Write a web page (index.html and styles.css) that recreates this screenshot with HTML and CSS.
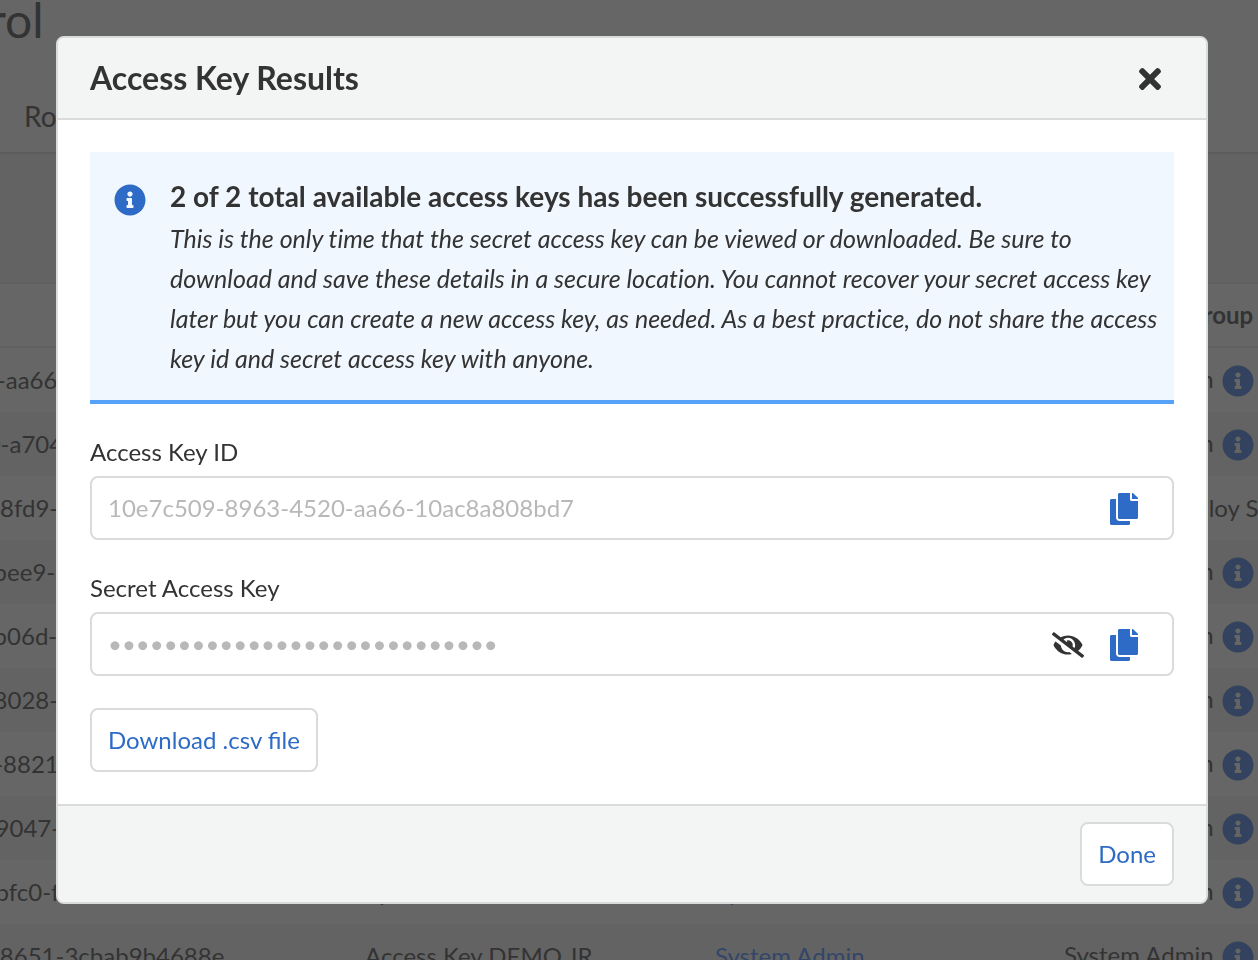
FILE: index.html
```html
<!DOCTYPE html>
<html lang="en">
<head>
<meta charset="utf-8">
<title>Access Control</title>
<link rel="stylesheet" href="styles.css">
</head>
<body>
<svg class="sprite" aria-hidden="true">
  <symbol id="i-info" viewBox="0 0 512 512"><path d="M256 8C119.043 8 8 119.083 8 256c0 136.997 111.043 248 248 248s248-111.003 248-248C504 119.083 392.957 8 256 8zm0 110c23.196 0 42 18.804 42 42s-18.804 42-42 42-42-18.804-42-42 18.804-42 42-42zm56 254c0 6.627-5.373 12-12 12h-88c-6.627 0-12-5.373-12-12v-24c0-6.627 5.373-12 12-12h12v-64h-12c-6.627 0-12-5.373-12-12v-24c0-6.627 5.373-12 12-12h64c6.627 0 12 5.373 12 12v100h12c6.627 0 12 5.373 12 12v24z"/></symbol>
  <symbol id="i-copy" viewBox="0 0 448 512"><path d="M320 448v40c0 13.255-10.745 24-24 24H24c-13.255 0-24-10.745-24-24V120c0-13.255 10.745-24 24-24h72v296c0 30.879 25.121 56 56 56h168zm0-344V0H152c-13.255 0-24 10.745-24 24v368c0 13.255 10.745 24 24 24h272c13.255 0 24-10.745 24-24V128H344c-13.2 0-24-10.8-24-24zm120.971-31.029L375.029 7.029A24 24 0 0 0 358.059 0H352v96h96v-6.059a24 24 0 0 0-7.029-16.97z"/></symbol>
</svg>

<main class="page">
  <h1 class="page-title">Access Control</h1>
  <nav class="tabs"><a class="tab" href="#roles">Roles</a></nav>
  <section class="content">
    <table class="keys">
      <colgroup><col class="col-id"><col class="col-name"><col class="col-user"><col></colgroup>
      <thead>
        <tr><th>Access Key ID</th><th>Name</th><th>User</th><th>Associated Group</th></tr>
      </thead>
      <tbody>
        <tr><td>10e7c509-8963-4520-aa66-10ac8a808bd7</td><td>Access Key</td><td><a href="#u">System Admin</a></td><td>System Admin <svg class="row-info"><use href="#i-info"/></svg></td></tr>
        <tr><td>20417509-8963-4520-a704-51ac8a808bd7</td><td>Access Key</td><td><a href="#u">System Admin</a></td><td>System Admin <svg class="row-info"><use href="#i-info"/></svg></td></tr>
        <tr><td>3ce7f509-8963-4520-8fd9-10ac8a808bd7</td><td>Access Key</td><td><a href="#u">System Admin</a></td><td>Software Deploy Support</td></tr>
        <tr><td>4fc7f509-8a63-4520-bee9-10ac8a808bd7</td><td>Access Key</td><td><a href="#u">System Admin</a></td><td>System Admin <svg class="row-info"><use href="#i-info"/></svg></td></tr>
        <tr><td>5fc7f509-8a63-4520-b06d-10ac8a808bd7</td><td>Access Key</td><td><a href="#u">System Admin</a></td><td>System Admin <svg class="row-info"><use href="#i-info"/></svg></td></tr>
        <tr><td>6fc7f509-8a63-4520-8028-10ac8a808bd7</td><td>Access Key</td><td><a href="#u">System Admin</a></td><td>System Admin <svg class="row-info"><use href="#i-info"/></svg></td></tr>
        <tr><td>7ce7c509-8963-4520-8821-10ac8a808bd7</td><td>Access Key</td><td><a href="#u">System Admin</a></td><td>System Admin <svg class="row-info"><use href="#i-info"/></svg></td></tr>
        <tr><td>8fc7f509-8963-4520-9047-10ac8a808bd7</td><td>Access Key</td><td><a href="#u">System Admin</a></td><td>System Admin <svg class="row-info"><use href="#i-info"/></svg></td></tr>
        <tr><td>9fc7f509-8963-4520-bfc0-f0ac8a808bd7</td><td>System Admin</td><td><a href="#u">System Admin</a></td><td>System Admin <svg class="row-info"><use href="#i-info"/></svg></td></tr>
        <tr><td>2fe7c509-8963-4520-8651-3cbab9b4688e</td><td>Access Key DEMO JR</td><td><a href="#u">System Admin</a></td><td>System Admin <svg class="row-info"><use href="#i-info"/></svg></td></tr>
      </tbody>
    </table>
  </section>
</main>

<div class="overlay">
  <div class="modal" role="dialog" aria-modal="true" aria-labelledby="modal-title">
    <header class="modal-header">
      <h2 class="modal-title" id="modal-title">Access Key Results</h2>
      <button class="icon-button" type="button" aria-label="Close">
        <svg class="icon-close" viewBox="0 0 352 512"><path d="M242.72 256l100.07-100.07c12.28-12.28 12.28-32.19 0-44.48l-22.24-22.24c-12.28-12.28-32.19-12.28-44.48 0L176 189.28 75.93 89.21c-12.28-12.28-32.19-12.28-44.48 0L9.21 111.45c-12.28 12.28-12.28 32.19 0 44.48L109.28 256 9.21 356.07c-12.28 12.28-12.28 32.19 0 44.48l22.24 22.24c12.28 12.28 32.2 12.28 44.48 0L176 322.72l100.07 100.07c12.28 12.28 32.2 12.28 44.48 0l22.24-22.24c12.28-12.28 12.28-32.19 0-44.48L242.72 256z"/></svg>
      </button>
    </header>
    <div class="modal-body">
      <div class="notice">
        <svg class="notice-icon"><use href="#i-info"/></svg>
        <div class="notice-text">
          <h3 class="notice-title">2 of 2 total available access keys has been successfully generated.</h3>
          <p class="notice-copy">This is the only time that the secret access key can be viewed or downloaded. Be sure to download and save these details in a secure location. You cannot recover your secret access key later but you can create a new access key, as needed. As a best practice, do not share the access key id and secret access key with anyone.</p>
        </div>
      </div>
      <div class="field">
        <label class="label" for="key-id">Access Key ID</label>
        <div class="control">
          <input class="input" id="key-id" type="text" readonly value="10e7c509-8963-4520-aa66-10ac8a808bd7">
          <button class="icon-button" type="button" aria-label="Copy access key ID"><svg class="icon-copy"><use href="#i-copy"/></svg></button>
        </div>
      </div>
      <div class="field">
        <label class="label" for="key-secret">Secret Access Key</label>
        <div class="control">
          <input class="input" id="key-secret" type="text" readonly value="••••••••••••••••••••••••••••">
          <button class="icon-button" type="button" aria-label="Show secret access key">
            <svg class="icon-eye" viewBox="0 0 640 512"><path d="M320 400c-75.85 0-137.25-58.71-142.9-133.11L72.2 185.82c-13.79 17.3-26.48 35.59-36.72 55.59a32.35 32.35 0 0 0 0 29.19C89.71 376.41 197.07 448 320 448c26.91 0 52.87-4 77.89-10.46L346 397.39a144.13 144.13 0 0 1-26 2.61zm313.82 58.1l-110.55-85.44a331.25 331.25 0 0 0 81.25-102.07 32.35 32.35 0 0 0 0-29.19C550.29 135.59 442.93 64 320 64a308.15 308.15 0 0 0-147.32 37.7L45.46 3.37A16 16 0 0 0 23 6.18L3.37 31.45A16 16 0 0 0 6.18 53.9l588.36 454.73a16 16 0 0 0 22.46-2.81l19.64-25.27a16 16 0 0 0-2.82-22.45zm-183.72-142l-39.3-30.38A94.75 94.75 0 0 0 416 256a94.76 94.76 0 0 0-121.31-92.21A47.65 47.65 0 0 1 304 192a46.64 46.64 0 0 1-1.54 10l-73.61-56.89A142.31 142.31 0 0 1 320 112a143.92 143.92 0 0 1 144 144c0 21.63-5.29 41.79-13.9 60.11z"/></svg>
          </button>
          <button class="icon-button" type="button" aria-label="Copy secret access key"><svg class="icon-copy"><use href="#i-copy"/></svg></button>
        </div>
      </div>
      <button class="button" type="button">Download .csv file</button>
    </div>
    <footer class="modal-footer">
      <button class="button" type="button">Done</button>
    </footer>
  </div>
</div>
</body>
</html>
```

FILE: styles.css
```css
* { box-sizing: border-box; }

body {
  margin: 0;
  height: 100vh;
  overflow: hidden;
  background: #666;
  color: #333;
  font: 24px/32px Lato, "Liberation Sans", sans-serif;
}

h1, h2, h3, p { margin: 0; }
svg { display: block; fill: currentColor; }
.sprite { display: none; }

/* Page behind the dialog, in its dimmed colours */
.page { height: 100vh; margin-left: -270px; overflow: hidden; }
.page-title { font-size: 48px; line-height: 40px; font-weight: 400; }
.tabs {
  display: flex;
  padding: 60px 0 20px 294px;
  border-bottom: 2px solid #5c5c5c;
  font-size: 28px;
}
.tab { color: inherit; text-decoration: none; }
.content { padding-top: 128px; background: #636363; }

.keys {
  width: 100%;
  table-layout: fixed;
  border-spacing: 0;
  border-top: 2px solid #606060;
  background: #666;
}
.col-id { width: 619px; }
.col-name { width: 350px; }
.col-user { width: 349px; }
.keys th, .keys td {
  height: 64px;
  padding: 0 16px;
  text-align: left;
  white-space: nowrap;
  overflow: hidden;
}
.keys th:first-child, .keys td:first-child { padding-left: 30px; }
.keys th:last-child, .keys td:last-child { padding-right: 0; }
.keys th { border-bottom: 2px solid #606060; }
.keys tbody tr:nth-child(even) { background: #636363; }
.keys a { color: #33456a; text-decoration: none; }
.row-info {
  display: inline-block;
  width: 32px;
  height: 32px;
  margin-left: 2px;
  vertical-align: middle;
  color: #33435f;
}

/* Dialog */
.overlay { position: fixed; inset: 0; padding: 36px 50px 36px 56px; }
.modal {
  border: 2px solid #dadbdb;
  border-radius: 8px;
  background: #fff;
  overflow: hidden;
}
.modal-header {
  display: flex;
  align-items: center;
  justify-content: space-between;
  padding: 20px 45px 20px 32px;
  border-bottom: 2px solid #dadcdb;
  background: #f3f5f4;
}
.modal-title { font-size: 32px; line-height: 40px; }
.modal-body { padding: 32px; }
.modal-footer {
  display: flex;
  justify-content: flex-end;
  padding: 16px 32px;
  border-top: 2px solid #dadcdb;
  background: #f3f5f4;
}

.notice {
  display: flex;
  gap: 24px;
  padding: 24px 16px 22px 24px;
  border-bottom: 4px solid #57a2f9;
  background: #f0f7fe;
}
.notice-icon { flex: none; width: 32px; height: 32px; margin-top: 8px; color: #2d6bc6; }
.notice-title { font-size: 28px; line-height: 40px; }
.notice-copy {
  margin-top: 2px;
  font-size: 25px;
  line-height: 40px;
  font-style: italic;
  font-variant-ligatures: none;
}

.field { margin: 32px 0; }
.label { display: block; margin-bottom: 8px; }
.control {
  display: flex;
  align-items: center;
  gap: 26px;
  height: 64px;
  padding: 0 34px 0 16px;
  border: 2px solid #dadbdb;
  border-radius: 8px;
}
.input {
  flex: 1;
  min-width: 0;
  padding: 0;
  border: 0;
  outline: 0;
  background: none;
  color: #b8b8b8;
  font: inherit;
}

.icon-button { padding: 2px 0 0; border: 0; background: none; color: #333; }
.icon-close { width: 22px; height: 32px; }
.icon-copy { width: 28px; height: 32px; color: #2d6bc6; }
.icon-eye { width: 32px; height: 26px; }

.button {
  height: 64px;
  padding: 0 16px;
  border: 2px solid #dadbdb;
  border-radius: 8px;
  background: #fff;
  color: #2d6bc6;
  font: inherit;
}
```
